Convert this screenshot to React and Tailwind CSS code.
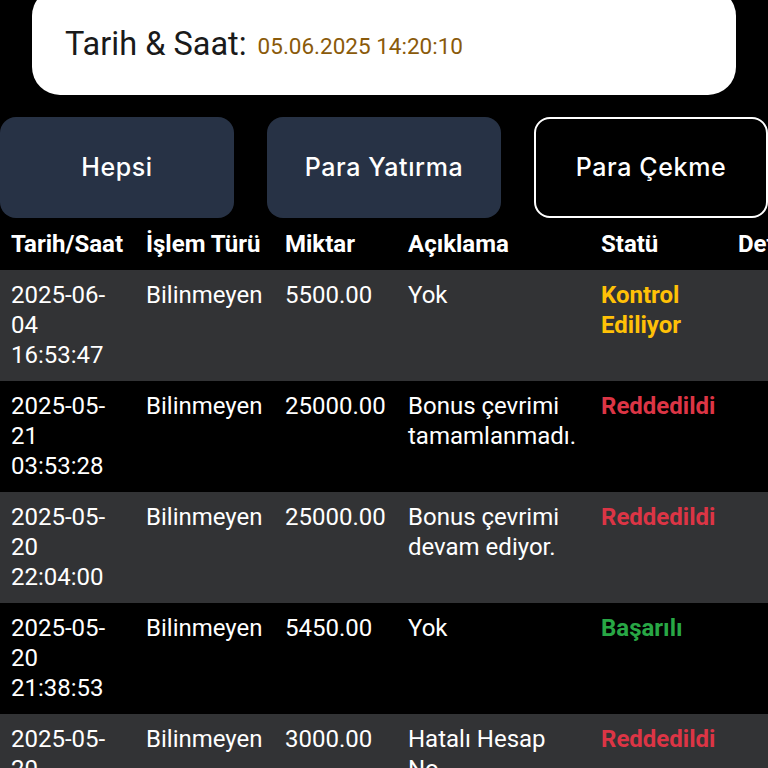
import React from 'react';

const rows = [
  { date: ['2025-06-', '04', '16:53:47'], type: 'Bilinmeyen', amount: '5500.00', desc: 'Yok', status: 'pending' },
  { date: ['2025-05-', '21', '03:53:28'], type: 'Bilinmeyen', amount: '25000.00', desc: 'Bonus çevrimi tamamlanmadı.', status: 'rejected' },
  { date: ['2025-05-', '20', '22:04:00'], type: 'Bilinmeyen', amount: '25000.00', desc: 'Bonus çevrimi devam ediyor.', status: 'rejected' },
  { date: ['2025-05-', '20', '21:38:53'], type: 'Bilinmeyen', amount: '5450.00', desc: 'Yok', status: 'success' },
  { date: ['2025-05-', '20', '21:10:05'], type: 'Bilinmeyen', amount: '3000.00', desc: 'Hatalı Hesap No.', status: 'rejected' },
];

const StatusText = ({ status }) => {
  switch (status) {
    case 'pending':
      return <span className="font-bold text-[#ffc107]">Kontrol Ediliyor</span>;
    case 'rejected':
      return <span className="font-bold text-[#dc3545]">Reddedildi</span>;
    case 'success':
      return <span className="font-bold text-[#28a745]">Başarılı</span>;
    default:
      return <span className="font-bold text-gray-400">Bilinmiyor</span>;
  }
};

const FilterButton = ({ label, active }) => (
  <button
    className={`h-[101px] rounded-[16px] text-[25px] tracking-[0.6px] font-medium text-white font-['Inter',sans-serif] ${
      active ? 'bg-black border-2 border-white' : 'bg-[#273245]'
    }`}
  >
    {label}
  </button>
);

export default function App() {
  return (
    <div className="w-[768px] h-[768px] overflow-hidden bg-black font-['Roboto',sans-serif]">
      <div className="mx-[32px] -mt-[12px] h-[107px] rounded-[28px] bg-white flex items-center px-[33px] pt-[6px]">
        <span className="text-[32.5px] text-[#1a1a1a]">Tarih &amp; Saat:</span>
        <span className="ml-[11px] mt-[4px] text-[22.5px] text-[#8a5a0a]">05.06.2025 14:20:10</span>
      </div>

      <div className="mt-[22px] grid grid-cols-3 gap-[33px]">
        <FilterButton label="Hepsi" />
        <FilterButton label="Para Yatırma" />
        <FilterButton label="Para Çekme" active />
      </div>

      <table className="table-fixed w-[880px] text-left text-[24px] leading-[30px] text-white">
        <colgroup>
          <col className="w-[135px]" />
          <col className="w-[139px]" />
          <col className="w-[123px]" />
          <col className="w-[193px]" />
          <col className="w-[137px]" />
          <col className="w-[153px]" />
        </colgroup>
        <thead>
          <tr className="font-bold">
            <th className="px-[11px] py-[11px]">Tarih/Saat</th>
            <th className="px-[11px] py-[11px]">İşlem Türü</th>
            <th className="px-[11px] py-[11px]">Miktar</th>
            <th className="px-[11px] py-[11px]">Açıklama</th>
            <th className="px-[11px] py-[11px]">Statü</th>
            <th className="px-[11px] py-[11px]">Detay</th>
          </tr>
        </thead>
        <tbody>
          {rows.map((row, i) => (
            <tr key={i} className={`align-top ${i % 2 === 0 ? 'bg-[#323335]' : 'bg-black'}`}>
              <td className="px-[11px] pt-[10px] pb-[11px]">
                {row.date.map((part, j) => (
                  <span key={j} className="block">{part}</span>
                ))}
              </td>
              <td className="px-[11px] pt-[10px] pb-[11px]">{row.type}</td>
              <td className="px-[11px] pt-[10px] pb-[11px]">{row.amount}</td>
              <td className="px-[11px] pt-[10px] pb-[11px]">{row.desc}</td>
              <td className="px-[11px] pt-[10px] pb-[11px]">
                <StatusText status={row.status} />
              </td>
              <td className="px-[11px] pt-[10px] pb-[11px]"></td>
            </tr>
          ))}
        </tbody>
      </table>
    </div>
  );
}
